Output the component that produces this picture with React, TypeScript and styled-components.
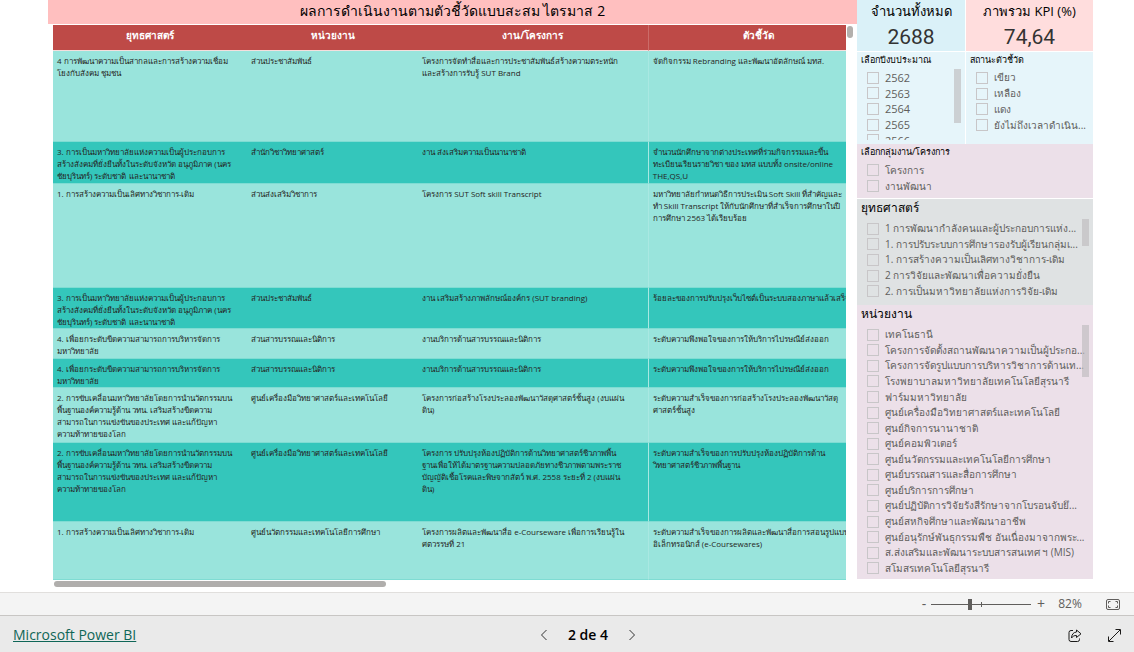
import React from "react";
import styled, { createGlobalStyle } from "styled-components";

const GlobalStyle = createGlobalStyle`
  * { box-sizing: border-box; }
  body {
    margin: 0;
    background: #ffffff;
    font-family: "Open Sans", "Noto Sans", sans-serif;
    color: #252423;
  }
  h1, h2, p, ul { margin: 0; padding: 0; font-weight: 400; }
  button { border: 0; padding: 0; background: none; font: inherit; color: inherit; cursor: pointer; }
`;

const Page = styled.div`
  display: flex;
  flex-direction: column;
  min-height: 100vh;
`;

const Report = styled.main`
  flex: 1;
  display: flex;
  align-items: flex-start;
  padding: 0 41px 0 48px;
`;

const TablePanel = styled.section`
  flex: 1;
  min-width: 0;
`;

const ReportTitle = styled.h1`
  height: 24px;
  margin-bottom: 1px;
  background: #ffbfbf;
  color: #000000;
  font-size: 14px;
  line-height: 22px;
  text-align: center;
  white-space: nowrap;
`;

const TableArea = styled.div`
  display: flex;
  gap: 1px;
  padding: 0 4px 0 5px;
`;

const TableClip = styled.div`
  flex: 1;
  min-width: 0;
  overflow: hidden;
`;

const VerticalThumb = styled.div`
  width: 6px;
  height: 12px;
  margin-top: 1px;
  border-radius: 3px;
  background: #b3b0ad;
`;

const HorizontalThumb = styled.div`
  width: 41%;
  height: 6px;
  margin: 1px 0 0 6px;
  border-radius: 3px;
  background: #b0aeac;
`;

const DataTable = styled.table`
  width: calc(100% + 22px);
  border-collapse: separate;
  border-spacing: 0;
  table-layout: fixed;
`;

const HeadCell = styled.th<{ $ruled?: boolean }>`
  height: 26px;
  padding: 0 0 5px;
  border-bottom: 1px solid #f5dedd;
  border-right: ${(p) => (p.$ruled ? "1px solid #cb6c69" : "0")};
  background: #be4a47;
  color: #ffffff;
  font-size: 10px;
  font-weight: 700;
  line-height: 14px;
`;

const Row = styled.tr<{ $height: number; $dark: boolean }>`
  height: ${(p) => p.$height}px;
  background: ${(p) => (p.$dark ? "#34c6bb" : "#99e4dc")};
`;

const Cell = styled.td<{ $ruled?: boolean }>`
  padding: 4px 0 0 4px;
  border-bottom: 1px solid #7fdcd3;
  border-right: ${(p) => (p.$ruled ? "1px solid #a9e8e2" : "0")};
  font-size: 8px;
  line-height: 12px;
  vertical-align: top;
  white-space: pre;
`;

const Sidebar = styled.aside`
  display: grid;
  grid-template-columns: 108px 127px;
  grid-template-rows: 52px 92px 54px 107px 274px;
  column-gap: 1px;
  flex: none;
`;

const Card = styled.section<{ $fill: string }>`
  background: ${(p) => p.$fill};
  margin-bottom: 1px;
  text-align: center;
  white-space: nowrap;
`;

const CardTitle = styled.h2`
  color: #000000;
  font-size: 13px;
  line-height: 22px;
`;

const CardValue = styled.p`
  color: #333333;
  font-family: Roboto, sans-serif;
  font-size: 21px;
  line-height: 31px;
`;

const Slicer = styled.section<{ $fill: string; $wide?: boolean; $gap?: boolean }>`
  position: relative;
  grid-column: ${(p) => (p.$wide ? "1 / -1" : "auto")};
  margin-top: ${(p) => (p.$gap ? 1 : 0)}px;
  padding: 0 4px 4px;
  background: ${(p) => p.$fill};
  display: flex;
  flex-direction: column;
  min-width: 0;
  min-height: 0;
`;

const SlicerTitle = styled.h2<{ $large?: boolean }>`
  flex: none;
  height: ${(p) => (p.$large ? 22 : 18)}px;
  color: #000000;
  font-size: ${(p) => (p.$large ? 12 : 9)}px;
  line-height: ${(p) => (p.$large ? 18 : 16)}px;
  white-space: nowrap;
`;

const ListClip = styled.div`
  flex: 1;
  min-height: 0;
  overflow: hidden;
`;

const OptionList = styled.ul<{ $rows: number; $height: number; $numeric: boolean }>`
  display: grid;
  grid-template-rows: repeat(${(p) => p.$rows}, 1fr);
  height: ${(p) => p.$height}px;
  list-style: none;
  font-size: ${(p) => (p.$numeric ? 11 : 10)}px;
`;

const Option = styled.li`
  min-height: 0;
  display: flex;
  align-items: center;
  padding-left: 6px;

  label {
    padding-left: 6px;
    color: #605e5c;
    line-height: 15px;
    white-space: nowrap;
  }
`;

const Tick = styled.input`
  appearance: none;
  flex: none;
  width: 12px;
  height: 12px;
  margin: 0;
  border: 1px solid #c8c6c8;

  &:checked { background: #605e5c; }
`;

const SlicerThumb = styled.div<{ $top: number; $height: number }>`
  position: absolute;
  top: ${(p) => p.$top}px;
  right: 4px;
  width: 7px;
  height: ${(p) => p.$height}px;
  background: rgba(190, 188, 190, 0.65);
`;

const ZoomBar = styled.div`
  height: 24px;
  display: flex;
  align-items: center;
  justify-content: flex-end;
  padding-right: 14px;
  border-top: 1px solid #e1dfdd;
  border-bottom: 1px solid #c8c6c4;
  background: #f4f4f4;
  color: #605e5c;
  font-size: 12px;
  line-height: 20px;
`;

const ZoomButton = styled.button`
  width: 14px;
  height: 20px;
  font-size: 14px;
  line-height: 20px;
`;

const SliderBox = styled.div`
  position: relative;
  display: flex;
  width: 100px;
  margin-right: 3px;

  &::after {
    content: "";
    position: absolute;
    left: 50px;
    top: 8px;
    width: 1px;
    height: 5px;
    background: #605e5c;
  }
`;

const Slider = styled.input`
  appearance: none;
  width: 100%;
  height: 20px;
  margin: 0;
  background: linear-gradient(#605e5c, #605e5c) center / 100% 1px no-repeat;

  &::-webkit-slider-thumb {
    appearance: none;
    width: 4px;
    height: 11px;
    background: #605e5c;
  }
`;

const ZoomValue = styled.span`
  width: 34px;
  margin-left: 5px;
  text-align: center;
`;

const FitButton = styled.button`
  display: flex;
  margin-left: 19px;
`;

const Footer = styled.footer`
  display: grid;
  grid-template-columns: 1fr auto 1fr;
  align-items: center;
  height: 36px;
  padding: 2px 13px 0;
  background: #eaeaea;
`;

const BrandLink = styled.a`
  justify-self: start;
  color: #0f6657;
  font-size: 14px;
  line-height: 20px;
`;

const Pager = styled.nav`
  display: flex;
  align-items: center;
  gap: 20px;
  padding-left: 42px;
  color: #000000;
  font-size: 14px;
  font-weight: 600;
  line-height: 20px;

  button { display: flex; }
`;

const Actions = styled.div`
  justify-self: end;
  display: flex;
  align-items: center;
  gap: 26px;

  button { display: flex; }
`;

type Record = { height: number; cells: string[] };

const headings = ["ยุทธศาสตร์", "หน่วยงาน", "งาน/โครงการ", "ตัวชี้วัด"];

const entrepreneurial =
  "3. การเป็นมหาวิทยาลัยแห่งความเป็นผู้ประกอบการ\nสร้างสังคมที่ยั่งยืนทั้งในระดับจังหวัด อนุภูมิภาค (นคร\nชัยบุรินทร์) ระดับชาติ และนานาชาติ";
const management = "4. เพื่อยกระดับขีดความสามารถการบริหารจัดการ\nมหาวิทยาลัย";
const innovation =
  "2. การขับเคลื่อนมหาวิทยาลัยโดยการนำนวัตกรรมบน\nพื้นฐานองค์ความรู้ด้าน วทน. เสริมสร้างขีดความ\nสามารถในการแข่งขันของประเทศ และแก้ปัญหา\nความท้าทายของโลก";

const records: Record[] = [
  {
    height: 91,
    cells: [
      "4 การพัฒนาความเป็นสากลและการสร้างความเชื่อม\nโยงกับสังคม ชุมชน",
      "ส่วนประชาสัมพันธ์",
      "โครงการจัดทำสื่อและการประชาสัมพันธ์สร้างความตระหนัก\nและสร้างการรับรู้ SUT Brand",
      "จัดกิจกรรม Rebranding และพัฒนาอัตลักษณ์ มทส.",
    ],
  },
  {
    height: 42,
    cells: [
      entrepreneurial,
      "สำนักวิชาวิทยาศาสตร์",
      "งาน ส่งเสริมความเป็นนานาชาติ",
      "จำนวนนักศึกษาจากต่างประเทศที่ร่วมกิจกรรมและขึ้น\nทะเบียนเรียนรายวิชา ของ มทส แบบทั้ง onsite/online\nTHE,QS,U",
    ],
  },
  {
    height: 104,
    cells: [
      "1. การสร้างความเป็นเลิศทางวิชาการ-เดิม",
      "ส่วนส่งเสริมวิชาการ",
      "โครงการ SUT Soft skill Transcript",
      "มหาวิทยาลัยกำหนดวิธีการประเมิน Soft Skill ที่สำคัญและ\nทำ Skill Transcript ให้กับนักศึกษาที่สำเร็จการศึกษาในปี\nการศึกษา 2563 ได้เรียบร้อย",
    ],
  },
  {
    height: 41,
    cells: [
      entrepreneurial,
      "ส่วนประชาสัมพันธ์",
      "งาน เสริมสร้างภาพลักษณ์องค์กร (SUT branding)",
      "ร้อยละของการปรับปรุงเว็บไซต์เป็นระบบสองภาษาแล้วเสร็จ",
    ],
  },
  {
    height: 30,
    cells: [
      management,
      "ส่วนสารบรรณและนิติการ",
      "งานบริการด้านสารบรรณและนิติการ",
      "ระดับความพึงพอใจของการให้บริการไปรษณีย์ส่งออก",
    ],
  },
  {
    height: 29,
    cells: [
      management,
      "ส่วนสารบรรณและนิติการ",
      "งานบริการด้านสารบรรณและนิติการ",
      "ระดับความพึงพอใจของการให้บริการไปรษณีย์ส่งออก",
    ],
  },
  {
    height: 55,
    cells: [
      innovation,
      "ศูนย์เครื่องมือวิทยาศาสตร์และเทคโนโลยี",
      "โครงการก่อสร้างโรงประลองพัฒนาวัสดุศาสตร์ชั้นสูง (งบแผ่น\nดิน)",
      "ระดับความสำเร็จของการก่อสร้างโรงประลองพัฒนาวัสดุ\nศาสตร์ชั้นสูง",
    ],
  },
  {
    height: 79,
    cells: [
      innovation,
      "ศูนย์เครื่องมือวิทยาศาสตร์และเทคโนโลยี",
      "โครงการ ปรับปรุงห้องปฏิบัติการด้านวิทยาศาสตร์ชีวภาพพื้น\nฐานเพื่อให้ได้มาตรฐานความปลอดภัยทางชีวภาพตามพระราช\nบัญญัติเชื้อโรคและพิษจากสัตว์ พ.ศ. 2558 ระยะที่ 2 (งบแผ่น\nดิน)",
      "ระดับความสำเร็จของการปรับปรุงห้องปฏิบัติการด้าน\nวิทยาศาสตร์ชีวภาพพื้นฐาน",
    ],
  },
  {
    height: 58,
    cells: [
      "1. การสร้างความเป็นเลิศทางวิชาการ-เดิม",
      "ศูนย์นวัตกรรมและเทคโนโลยีการศึกษา",
      "โครงการผลิตและพัฒนาสื่อ e-Courseware เพื่อการเรียนรู้ใน\nศตวรรษที่ 21",
      "ระดับความสำเร็จของการผลิตและพัฒนาสื่อการสอนรูปแบบ\nอิเล็กทรอนิกส์ (e-Coursewares)",
    ],
  },
];

const years = ["2562", "2563", "2564", "2565", "2566"];
const statuses = ["เขียว", "เหลือง", "แดง", "ยังไม่ถึงเวลาดำเนิน..."];
const groups = ["โครงการ", "งานพัฒนา"];
const strategies = [
  "1 การพัฒนากำลังคนและผู้ประกอบการแห่ง...",
  "1. การปรับระบบการศึกษารองรับผู้เรียนกลุ่มเ...",
  "1. การสร้างความเป็นเลิศทางวิชาการ-เดิม",
  "2 การวิจัยและพัฒนาเพื่อความยั่งยืน",
  "2. การเป็นมหาวิทยาลัยแห่งการวิจัย-เดิม",
];
const units = [
  "เทคโนธานี",
  "โครงการจัดตั้งสถานพัฒนาความเป็นผู้ประกอ...",
  "โครงการจัดรูปแบบการบริหารวิชาการด้านเท...",
  "โรงพยาบาลมหาวิทยาลัยเทคโนโลยีสุรนารี",
  "ฟาร์มมหาวิทยาลัย",
  "ศูนย์เครื่องมือวิทยาศาสตร์และเทคโนโลยี",
  "ศูนย์กิจการนานาชาติ",
  "ศูนย์คอมพิวเตอร์",
  "ศูนย์นวัตกรรมและเทคโนโลยีการศึกษา",
  "ศูนย์บรรณสารและสื่อการศึกษา",
  "ศูนย์บริการการศึกษา",
  "ศูนย์ปฏิบัติการวิจัยรังสีรักษาจากโบรอนจับยึ...",
  "ศูนย์สหกิจศึกษาและพัฒนาอาชีพ",
  "ศูนย์อนุรักษ์พันธุกรรมพืช อันเนื่องมาจากพระ...",
  "ส.ส่งเสริมและพัฒนาระบบสารสนเทศ ฯ (MIS)",
  "สโมสรเทคโนโลยีสุรนารี",
];

type OptionsProps = { name: string; items: string[]; height: number; numeric?: boolean };

function Options({ name, items, height, numeric = false }: OptionsProps) {
  return (
    <ListClip>
      <OptionList $rows={items.length} $height={height} $numeric={numeric}>
        {items.map((item, i) => (
          <Option key={item}>
            <Tick type="checkbox" id={`${name}-${i}`} />
            <label htmlFor={`${name}-${i}`}>{item}</label>
          </Option>
        ))}
      </OptionList>
    </ListClip>
  );
}

export default function App() {
  return (
    <Page>
      <GlobalStyle />
      <Report>
        <TablePanel>
          <ReportTitle>ผลการดำเนินงานตามตัวชี้วัดแบบสะสม ไตรมาส 2</ReportTitle>
          <TableArea>
            <TableClip>
              <DataTable>
                <colgroup>
                  <col style={{ width: "23.8%" }} />
                  <col style={{ width: "21%" }} />
                  <col style={{ width: "28.3%" }} />
                  <col />
                </colgroup>
                <thead>
                  <tr>
                    {headings.map((h, i) => (
                      <HeadCell key={h} $ruled={i === 2}>{h}</HeadCell>
                    ))}
                  </tr>
                </thead>
                <tbody>
                  {records.map((r, i) => (
                    <Row key={i} $height={r.height} $dark={i % 2 === 1}>
                      {r.cells.map((c, j) => (
                        <Cell key={j} $ruled={j === 2}>{c}</Cell>
                      ))}
                    </Row>
                  ))}
                </tbody>
              </DataTable>
            </TableClip>
            <VerticalThumb />
          </TableArea>
          <HorizontalThumb />
        </TablePanel>

        <Sidebar>
          <Card $fill="#daf1f8">
            <CardTitle>จำนวนทั้งหมด</CardTitle>
            <CardValue>2688</CardValue>
          </Card>
          <Card $fill="#ffdddd">
            <CardTitle>ภาพรวม KPI (%)</CardTitle>
            <CardValue>74,64</CardValue>
          </Card>
          <Slicer $fill="#e6f5fa">
            <SlicerTitle>เลือกปีงบประมาณ</SlicerTitle>
            <Options name="year" items={years} height={78} numeric />
            <SlicerThumb $top={17} $height={54} />
          </Slicer>
          <Slicer $fill="#e6f5fa">
            <SlicerTitle>สถานะตัวชี้วัด</SlicerTitle>
            <Options name="status" items={statuses} height={63} />
          </Slicer>
          <Slicer $fill="#ece0e9" $wide>
            <SlicerTitle>เลือกกลุ่มงาน/โครงการ</SlicerTitle>
            <Options name="group" items={groups} height={32} />
          </Slicer>
          <Slicer $fill="#dfe2e3" $wide $gap>
            <SlicerTitle $large>ยุทธศาสตร์</SlicerTitle>
            <Options name="strategy" items={strategies} height={78} />
            <SlicerThumb $top={20} $height={27} />
          </Slicer>
          <Slicer $fill="#ece0e9" $wide>
            <SlicerTitle $large>หน่วยงาน</SlicerTitle>
            <Options name="unit" items={units} height={249} />
            <SlicerThumb $top={20} $height={52} />
          </Slicer>
        </Sidebar>
      </Report>

      <ZoomBar>
        <ZoomButton aria-label="Zoom out">-</ZoomButton>
        <SliderBox>
          <Slider type="range" min={0} max={100} defaultValue={39} aria-label="Zoom" />
        </SliderBox>
        <ZoomButton aria-label="Zoom in">+</ZoomButton>
        <ZoomValue>82%</ZoomValue>
        <FitButton aria-label="Fit to page">
          <svg width="14" height="11" viewBox="0 0 14 11" fill="none" stroke="#605e5c">
            <rect x="0.5" y="0.5" width="13" height="10" rx="1.5" />
            <path d="M2.5 4.5v-2h2M9.5 2.5h2v2M11.5 6.5v2h-2M4.5 8.5h-2v-2" />
          </svg>
        </FitButton>
      </ZoomBar>

      <Footer>
        <BrandLink href="#powerbi">Microsoft Power BI</BrandLink>
        <Pager aria-label="Pages">
          <button aria-label="Previous page">
            <svg width="8" height="12" viewBox="0 0 8 12" fill="none" stroke="#333333">
              <path d="M6.5 1L1.5 6L6.5 11" />
            </svg>
          </button>
          <span>2 de 4</span>
          <button aria-label="Next page">
            <svg width="8" height="12" viewBox="0 0 8 12" fill="none" stroke="#333333">
              <path d="M1.5 1L6.5 6L1.5 11" />
            </svg>
          </button>
        </Pager>
        <Actions>
          <button aria-label="Share">
            <svg width="14" height="13" viewBox="0 0 14 13" fill="none" stroke="#1b1a19" strokeLinejoin="round">
              <path d="M5 1.500H3A2 2 0 0 0 1 3.500V10.500A2 2 0 0 0 3 12.500H9.500A2 2 0 0 0 11.500 10.500V9.500" />
              <path d="M8.500 1L13 4.800L8.500 8.500V6.500C6.300 6.400 4.700 7.200 3.500 9C3.700 5.500 5.300 3.300 8.500 3Z" />
            </svg>
          </button>
          <button aria-label="Full screen">
            <svg width="13" height="13" viewBox="0 0 13 13" fill="none" stroke="#1b1a19">
              <path d="M1 12L12 1M7.500 0.500H12.500V5.500M0.500 7.500V12.500H5.500" />
            </svg>
          </button>
        </Actions>
      </Footer>
    </Page>
  );
}
